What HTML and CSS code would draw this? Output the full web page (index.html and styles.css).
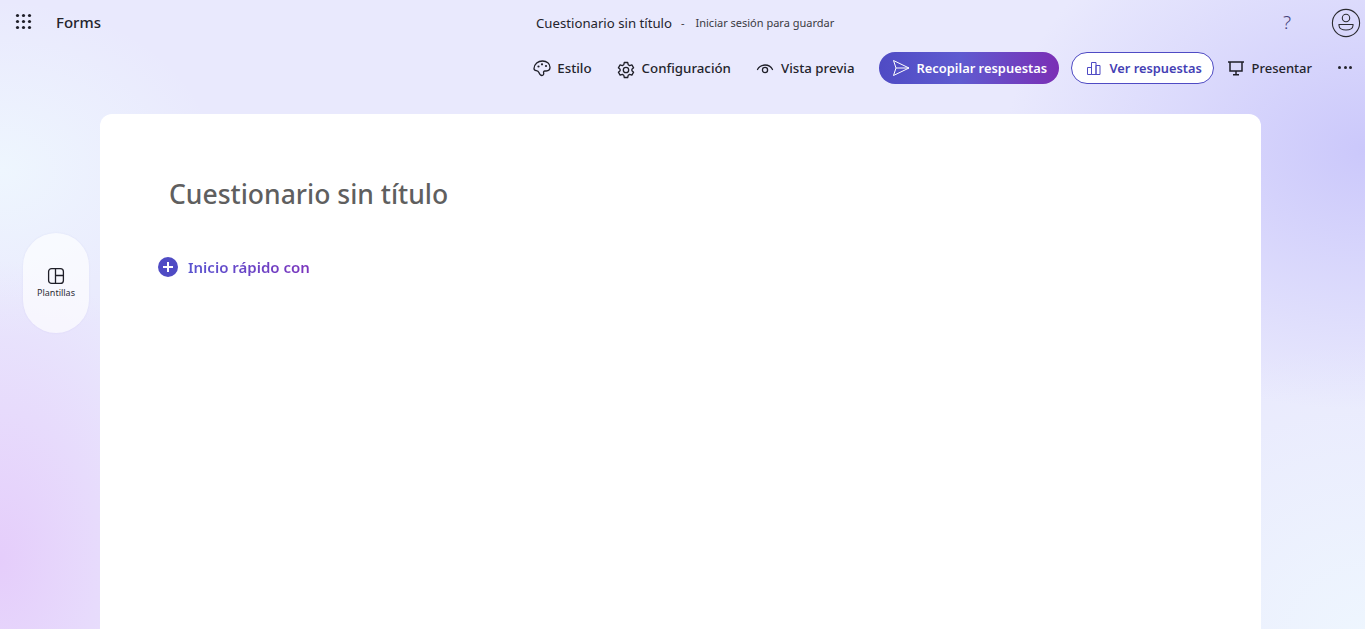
FILE: index.html
```html
<!DOCTYPE html>
<html lang="es">
<head>
    <meta charset="UTF-8">
    <meta name="viewport" content="width=device-width, initial-scale=1.0">
    <title>Forms</title>
    <link rel="stylesheet" href="styles.css">
</head>
<body>

    <div class="topbar">
        <div class="brand">
            <svg class="waffle" width="17" height="17" viewBox="0 0 17 17" fill="#1f1f28">
                <circle cx="2.5" cy="2.5" r="1.6"/><circle cx="8.5" cy="2.5" r="1.6"/><circle cx="14.5" cy="2.5" r="1.6"/>
                <circle cx="2.5" cy="8.5" r="1.6"/><circle cx="8.5" cy="8.5" r="1.6"/><circle cx="14.5" cy="8.5" r="1.6"/>
                <circle cx="2.5" cy="14.5" r="1.6"/><circle cx="8.5" cy="14.5" r="1.6"/><circle cx="14.5" cy="14.5" r="1.6"/>
            </svg>
            <span class="brand-name">Forms</span>
        </div>
        <div class="doc-title">
            <span class="doc-name">Cuestionario sin título</span>
            <span class="doc-sep">-</span>
            <span class="doc-status">Iniciar sesión para guardar</span>
        </div>
        <div class="account">
            <span class="help">?</span>
            <svg width="30" height="30" viewBox="0 0 30 30" fill="none" stroke="#2b2b30" stroke-width="1.1">
                <circle cx="15" cy="15" r="13.6"/>
                <circle cx="15" cy="10" r="3.7"/>
                <path d="M8 16.5h14v1c0 2.7-3 4.5-7 4.5s-7-1.8-7-4.5z"/>
            </svg>
        </div>
    </div>

    <!-- Actions -->
    <div class="toolbar">
        <a class="tool">
            <svg class="palette" width="20" height="20" viewBox="0 0 20 20" fill="none" stroke="#1f1f28" stroke-width="1.3">
                <path d="M2 10.5C2.3 6 6 3 10.5 3c4.3 0 7.5 2.8 7.5 6.3 0 2.3-1.7 3.7-3.8 3.7h-1.4c-1 0-1.5 .8-1.2 1.7.4 1.2-.1 2.8-1.7 2.8-1.7 0-2.4-1.5-3-3-.5-1.2-1.3-1.6-2.600-1.900C2.800 12.300 1.900 11.800 2 10.500z"/>
                <circle cx="6.5" cy="8.5" r="1.1" fill="#1f1f28" stroke="none"/>
                <circle cx="10" cy="6.3" r="1.1" fill="#1f1f28" stroke="none"/>
                <circle cx="14" cy="8" r="1.1" fill="#1f1f28" stroke="none"/>
            </svg>
            Estilo
        </a>
        <a class="tool">
            <svg class="gear" width="20" height="20" viewBox="0 0 20 20" fill="none" stroke="#1f1f28" stroke-width="1.3" stroke-linejoin="round">
                <circle cx="10" cy="10" r="2.7"/>
                <path d="M8.3 2.5h3.4l.5 2.2 1.5.9 2.2-.7 1.7 2.9-1.7 1.5v1.400l1.700 1.500-1.700 2.900-2.200-.7-1.500.9-.5 2.200H8.300l-.5-2.200-1.500-.9-2.200.7-1.700-2.900 1.700-1.500V9.300L2.400 7.800l1.700-2.900 2.200.7 1.500-.9z"/>
            </svg>
            Configuración
        </a>
        <a class="tool">
            <svg width="20" height="20" viewBox="0 0 20 20" fill="none" stroke="#1f1f28" stroke-width="1.3" stroke-linecap="round">
                <path d="M2.5 11.5C4 8.5 6.8 7 10 7s6 1.5 7.5 4.5"/>
                <circle cx="10" cy="12" r="2.6"/>
            </svg>
            Vista previa
        </a>
        <a class="btn-collect">
            <svg width="20" height="20" viewBox="0 0 20 20" fill="none" stroke="#fff" stroke-width="1" stroke-linejoin="round">
                <path d="M2.5 2.5L18 10 2.5 17.5 5 10z"/>
                <path d="M5 10h13"/>
            </svg>
            Recopilar respuestas
        </a>
        <a class="btn-results">
            <svg width="16" height="16" viewBox="0 0 16 16" fill="none" stroke="#4f4bc4" stroke-width="1">
                <path d="M1.5 14.5v-7h4v7zM5.5 14.5V2.5H10v12zM10 14.5v-9h4v9z"/>
            </svg>
            Ver respuestas
        </a>
        <a class="tool tool-present">
            <svg width="18" height="18" viewBox="0 0 18 18" fill="none" stroke="#1f1f28" stroke-width="1.5">
                <path d="M1 3h16M3 3v9h12V3"/>
                <path d="M9 12v3.5M6 15.7h6"/>
            </svg>
            Presentar
        </a>
        <a class="more">
            <i></i><i></i><i></i>
        </a>
    </div>

    <div class="workspace">
        <div class="sidebar">
            <a class="side-pill">
                <svg width="18" height="18" viewBox="0 0 18 18" fill="none" stroke="#1f1f28" stroke-width="1.3">
                    <rect x="1.6" y="1.6" width="14.8" height="14.8" rx="3"/>
                    <path d="M8.5 1.6v14.8M8.5 8.5h7.9"/>
                </svg>
                <span>Plantillas</span>
            </a>
        </div>

        <div class="card">
            <h1 class="form-title">Cuestionario sin título</h1>
            <div class="quick-start">
                <span class="plus"></span>
                <span class="quick-text">Inicio rápido con</span>
            </div>
        </div>
    </div>

</body>
</html>
```

FILE: styles.css
```css
* {
    box-sizing: border-box;
}

body {
    margin: 0;
    height: 629px;
    overflow: hidden;
    font-family: "Noto Sans", "Open Sans", Arial, sans-serif;
    color: #24242c;
    background-color: #e9e9fd;
    background-image:
        radial-gradient(ellipse 360px 260px at 100% 150px, #cbc8fb 0%, rgba(203, 200, 251, 0) 100%),
        radial-gradient(ellipse 320px 300px at 100% 640px, #eef6fe 0%, rgba(238, 246, 254, 0) 100%),
        radial-gradient(ellipse 200px 300px at 0 560px, #e5cdfb 0%, rgba(229, 205, 251, 0) 100%),
        radial-gradient(ellipse 220px 170px at 0 170px, #eef6fe 0%, rgba(238, 246, 254, 0) 100%);
}

/* Top row */
.topbar {
    display: flex;
    align-items: center;
    height: 45px;
    padding: 0 4px 0 15px;
}

.brand {
    display: flex;
    align-items: center;
    gap: 24px;
    width: 86px;
    margin-top: -2px;
}

.brand-name {
    font-size: 15px;
    font-weight: 500;
}

.doc-title {
    display: flex;
    align-items: center;
    gap: 9px;
    margin-left: 435px;
    white-space: nowrap;
}

.doc-name {
    font-size: 13.2px;
}

.doc-sep,
.doc-status {
    font-size: 11px;
    color: #3a3a42;
}

.doc-status {
    margin-left: 2px;
}

.account {
    margin-left: auto;
    display: flex;
    align-items: center;
    gap: 40px;
}

.help {
    margin-top: -2px;
    font-size: 19px;
    font-weight: 300;
    color: #45427a;
}

/* Actions */
.toolbar {
    display: flex;
    align-items: center;
    justify-content: flex-end;
    gap: 24px;
    height: 46px;
    padding-right: 11px;
}

.tool {
    display: flex;
    align-items: center;
    gap: 6px;
    font-size: 13.3px;
    font-weight: 500;
    white-space: nowrap;
    cursor: pointer;
}

.palette {
    margin-right: -1px;
}

.gear {
    margin-top: 4px;
}

.btn-collect {
    display: flex;
    align-items: center;
    gap: 6px;
    width: 180px;
    height: 32px;
    padding-left: 12px;
    border-radius: 16px;
    color: #fff;
    font-size: 12.9px;
    font-weight: 600;
    white-space: nowrap;
    background: linear-gradient(90deg, #4f4bc4 0%, #5f5bd0 45%, #7b2fb5 100%);
    cursor: pointer;
}

.btn-results {
    display: flex;
    align-items: center;
    gap: 8px;
    width: 143px;
    height: 32px;
    margin-left: -12px;
    margin-right: -11px;
    padding-left: 14px;
    border: 1px solid #4f4bc4;
    border-radius: 16px;
    background-color: #fff;
    color: #4440b4;
    font-size: 12.8px;
    font-weight: 600;
    white-space: nowrap;
    cursor: pointer;
}

.tool-present {
    gap: 7px;
    font-size: 13px;
}

.more {
    display: flex;
    gap: 2.5px;
    margin-top: -2px;
    padding: 0 2px;
}

.more i {
    width: 3px;
    height: 3px;
    border-radius: 50%;
    background-color: #24242c;
}

/* Main area */
.workspace {
    display: flex;
    height: 538px;
    padding-top: 23px;
}

.sidebar {
    width: 100px;
    flex-shrink: 0;
    padding: 119px 0 0 23px;
}

.side-pill {
    display: flex;
    flex-direction: column;
    align-items: center;
    justify-content: center;
    gap: 1px;
    width: 66px;
    height: 100px;
    border-radius: 33px;
    background-color: rgba(255, 255, 255, 0.65);
    box-shadow: 0 0 2px rgba(100, 90, 180, 0.1);
    font-size: 9px;
    color: #2e2e36;
    cursor: pointer;
}

.card {
    width: 1161px;
    height: 540px;
    padding: 60px 0 0 58px;
    border-radius: 12px 12px 0 0;
    background-color: #fff;
}

.form-title {
    margin: 0 0 0 11px;
    font-size: 26.5px;
    font-weight: 500;
    line-height: 40px;
    color: #5f5f5f;
}

.quick-start {
    display: flex;
    align-items: center;
    gap: 10px;
    margin-top: 43px;
}

.plus {
    position: relative;
    width: 20px;
    height: 20px;
    border-radius: 50%;
    background-color: #4f4bc4;
}

.plus::before,
.plus::after {
    content: "";
    position: absolute;
    background-color: #fff;
}

.plus::before {
    left: 5px;
    top: 9px;
    width: 10px;
    height: 2px;
}

.plus::after {
    left: 9px;
    top: 5px;
    width: 2px;
    height: 10px;
}

.quick-text {
    font-size: 15px;
    font-weight: 600;
    color: #6a4ccb;
    background: linear-gradient(90deg, #5a55d0, #7b35bd);
    -webkit-background-clip: text;
    background-clip: text;
    -webkit-text-fill-color: transparent;
}
```
